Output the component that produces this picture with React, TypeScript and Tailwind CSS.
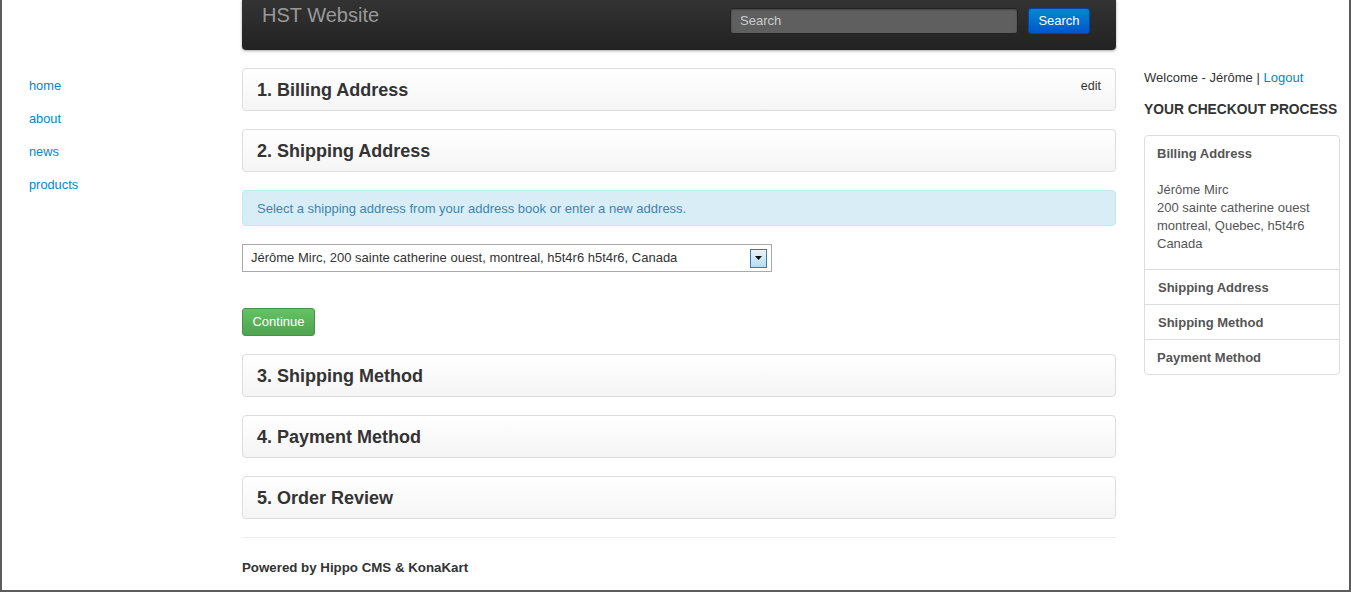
import React from "react";

const Panel = ({ title, edit }: { title: string; edit?: boolean }) => (
  <div className="relative h-[43px] rounded-[4px] border border-[#dddddd] bg-gradient-to-b from-white to-[#f5f5f5] flex items-center px-[14px]">
    <h2 className="text-[18px] font-bold text-[#333] leading-none">{title}</h2>
    {edit && (
      <span className="absolute right-[14px] top-[8px] text-[12.5px] text-[#333]">edit</span>
    )}
  </div>
);

export default function App() {
  return (
    <div
      className="h-[592px] w-[1351px] overflow-hidden border-l-2 border-r-2 border-b-2 border-[#5c5c5c] bg-white text-[#333]"
      style={{ fontFamily: '"Liberation Sans", Arial, sans-serif' }}
    >
      <div className="flex">
        {/* left nav */}
        <div className="w-[240px] pl-[27px] pt-[78px] shrink-0">
          <ul className="flex flex-col gap-[17px] text-[12.8px] text-[#0088cc] leading-[16px]">
            <li>home</li>
            <li>about</li>
            <li>news</li>
            <li>products</li>
          </ul>
        </div>

        {/* main */}
        <div className="w-[874px] shrink-0">
          <div className="h-[50px] rounded-b-[4px] bg-gradient-to-b from-[#333333] to-[#222222] shadow-[0_1px_3px_rgba(0,0,0,0.35)] flex items-start justify-between pl-[20px] pr-[26px]">
            <div className="text-[20px] text-[#999999] leading-[30px]">HST Website</div>
            <div className="flex items-center gap-[10px] pt-[8px]">
              <div className="w-[288px] h-[26px] rounded-[3px] border border-[#222] bg-[#5f5f5f] shadow-[inset_0_1px_2px_rgba(0,0,0,0.3)] text-[13px] text-[#cccccc] leading-[24px] pl-[9px]">
                Search
              </div>
              <div className="h-[26px] w-[62px] rounded-[3px] bg-gradient-to-b from-[#0088cc] to-[#0055cc] border border-[#0044aa] text-white text-[13px] leading-[24px] text-center">
                Search
              </div>
            </div>
          </div>

          <div className="mt-[18px] flex flex-col">
            <Panel title="1. Billing Address" edit />
            <div className="mt-[18px]">
              <Panel title="2. Shipping Address" />
            </div>
            <div className="mt-[18px] h-[36px] rounded-[4px] border border-[#bce8f1] bg-[#d9edf7] text-[#3a87ad] text-[13px] flex items-center pt-[1px] px-[14px]">
              Select a shipping address from your address book or enter a new address.
            </div>
            <div className="mt-[18px] w-[530px] h-[28px] border border-[#aaaaaa] bg-white flex items-center justify-between pl-[8px] pr-[4px]">
              <span className="text-[13px] text-[#333]">
                Jérôme Mirc, 200 sainte catherine ouest, montreal, h5t4r6 h5t4r6, Canada
              </span>
              <span className="w-[17px] h-[19px] border border-[#3d7bad] bg-gradient-to-b from-[#e8f4fc] to-[#b7dbf3] flex items-center justify-center">
                <svg width="7" height="4" viewBox="0 0 7 4">
                  <path d="M0 0h7L3.5 4z" fill="#111" />
                </svg>
              </span>
            </div>
            <div className="mt-[36px] w-[73px] h-[28px] rounded-[3px] bg-gradient-to-b from-[#62c462] to-[#51a351] border border-[#459345] text-white text-[13px] leading-[26px] text-center">
              Continue
            </div>
            <div className="mt-[18px]">
              <Panel title="3. Shipping Method" />
            </div>
            <div className="mt-[18px]">
              <Panel title="4. Payment Method" />
            </div>
            <div className="mt-[18px]">
              <Panel title="5. Order Review" />
            </div>
            <div className="mt-[18px] border-t border-[#eeeeee]" />
            <div className="mt-[20px] text-[13.3px] font-bold text-[#333]">
              Powered by Hippo CMS &amp; KonaKart
            </div>
          </div>
        </div>

        {/* right column */}
        <div className="ml-[28px] w-[196px] shrink-0 pt-[69px]">
          <div className="text-[13px] leading-[17px] text-[#333] whitespace-nowrap">
            Welcome - Jérôme <span className="text-[#333]">|</span>{" "}
            <span className="text-[#0088cc]">Logout</span>
          </div>
          <div className="mt-[16px] text-[13.8px] font-bold text-[#333] leading-[16px] whitespace-nowrap">
            YOUR CHECKOUT PROCESS
          </div>
          <div className="mt-[17px] rounded-[4px] border border-[#dddddd] text-[13px] text-[#555]">
            <div className="px-[12px] pt-[10px] pb-[16px] border-b border-[#dddddd]">
              <div className="font-bold leading-[16px]">Billing Address</div>
              <div className="mt-[19px] leading-[18px]">
                Jérôme Mirc
                <br />
                200 sainte catherine ouest
                <br />
                montreal, Quebec, h5t4r6
                <br />
                Canada
              </div>
            </div>
            <div className="h-[35px] flex items-center pt-[1px] px-[13px] font-bold border-b border-[#dddddd]">
              Shipping Address
            </div>
            <div className="h-[35px] flex items-center pt-[1px] px-[13px] font-bold border-b border-[#dddddd]">
              Shipping Method
            </div>
            <div className="h-[34px] flex items-center pt-[1px] px-[12px] font-bold">Payment Method</div>
          </div>
        </div>
      </div>
    </div>
  );
}
